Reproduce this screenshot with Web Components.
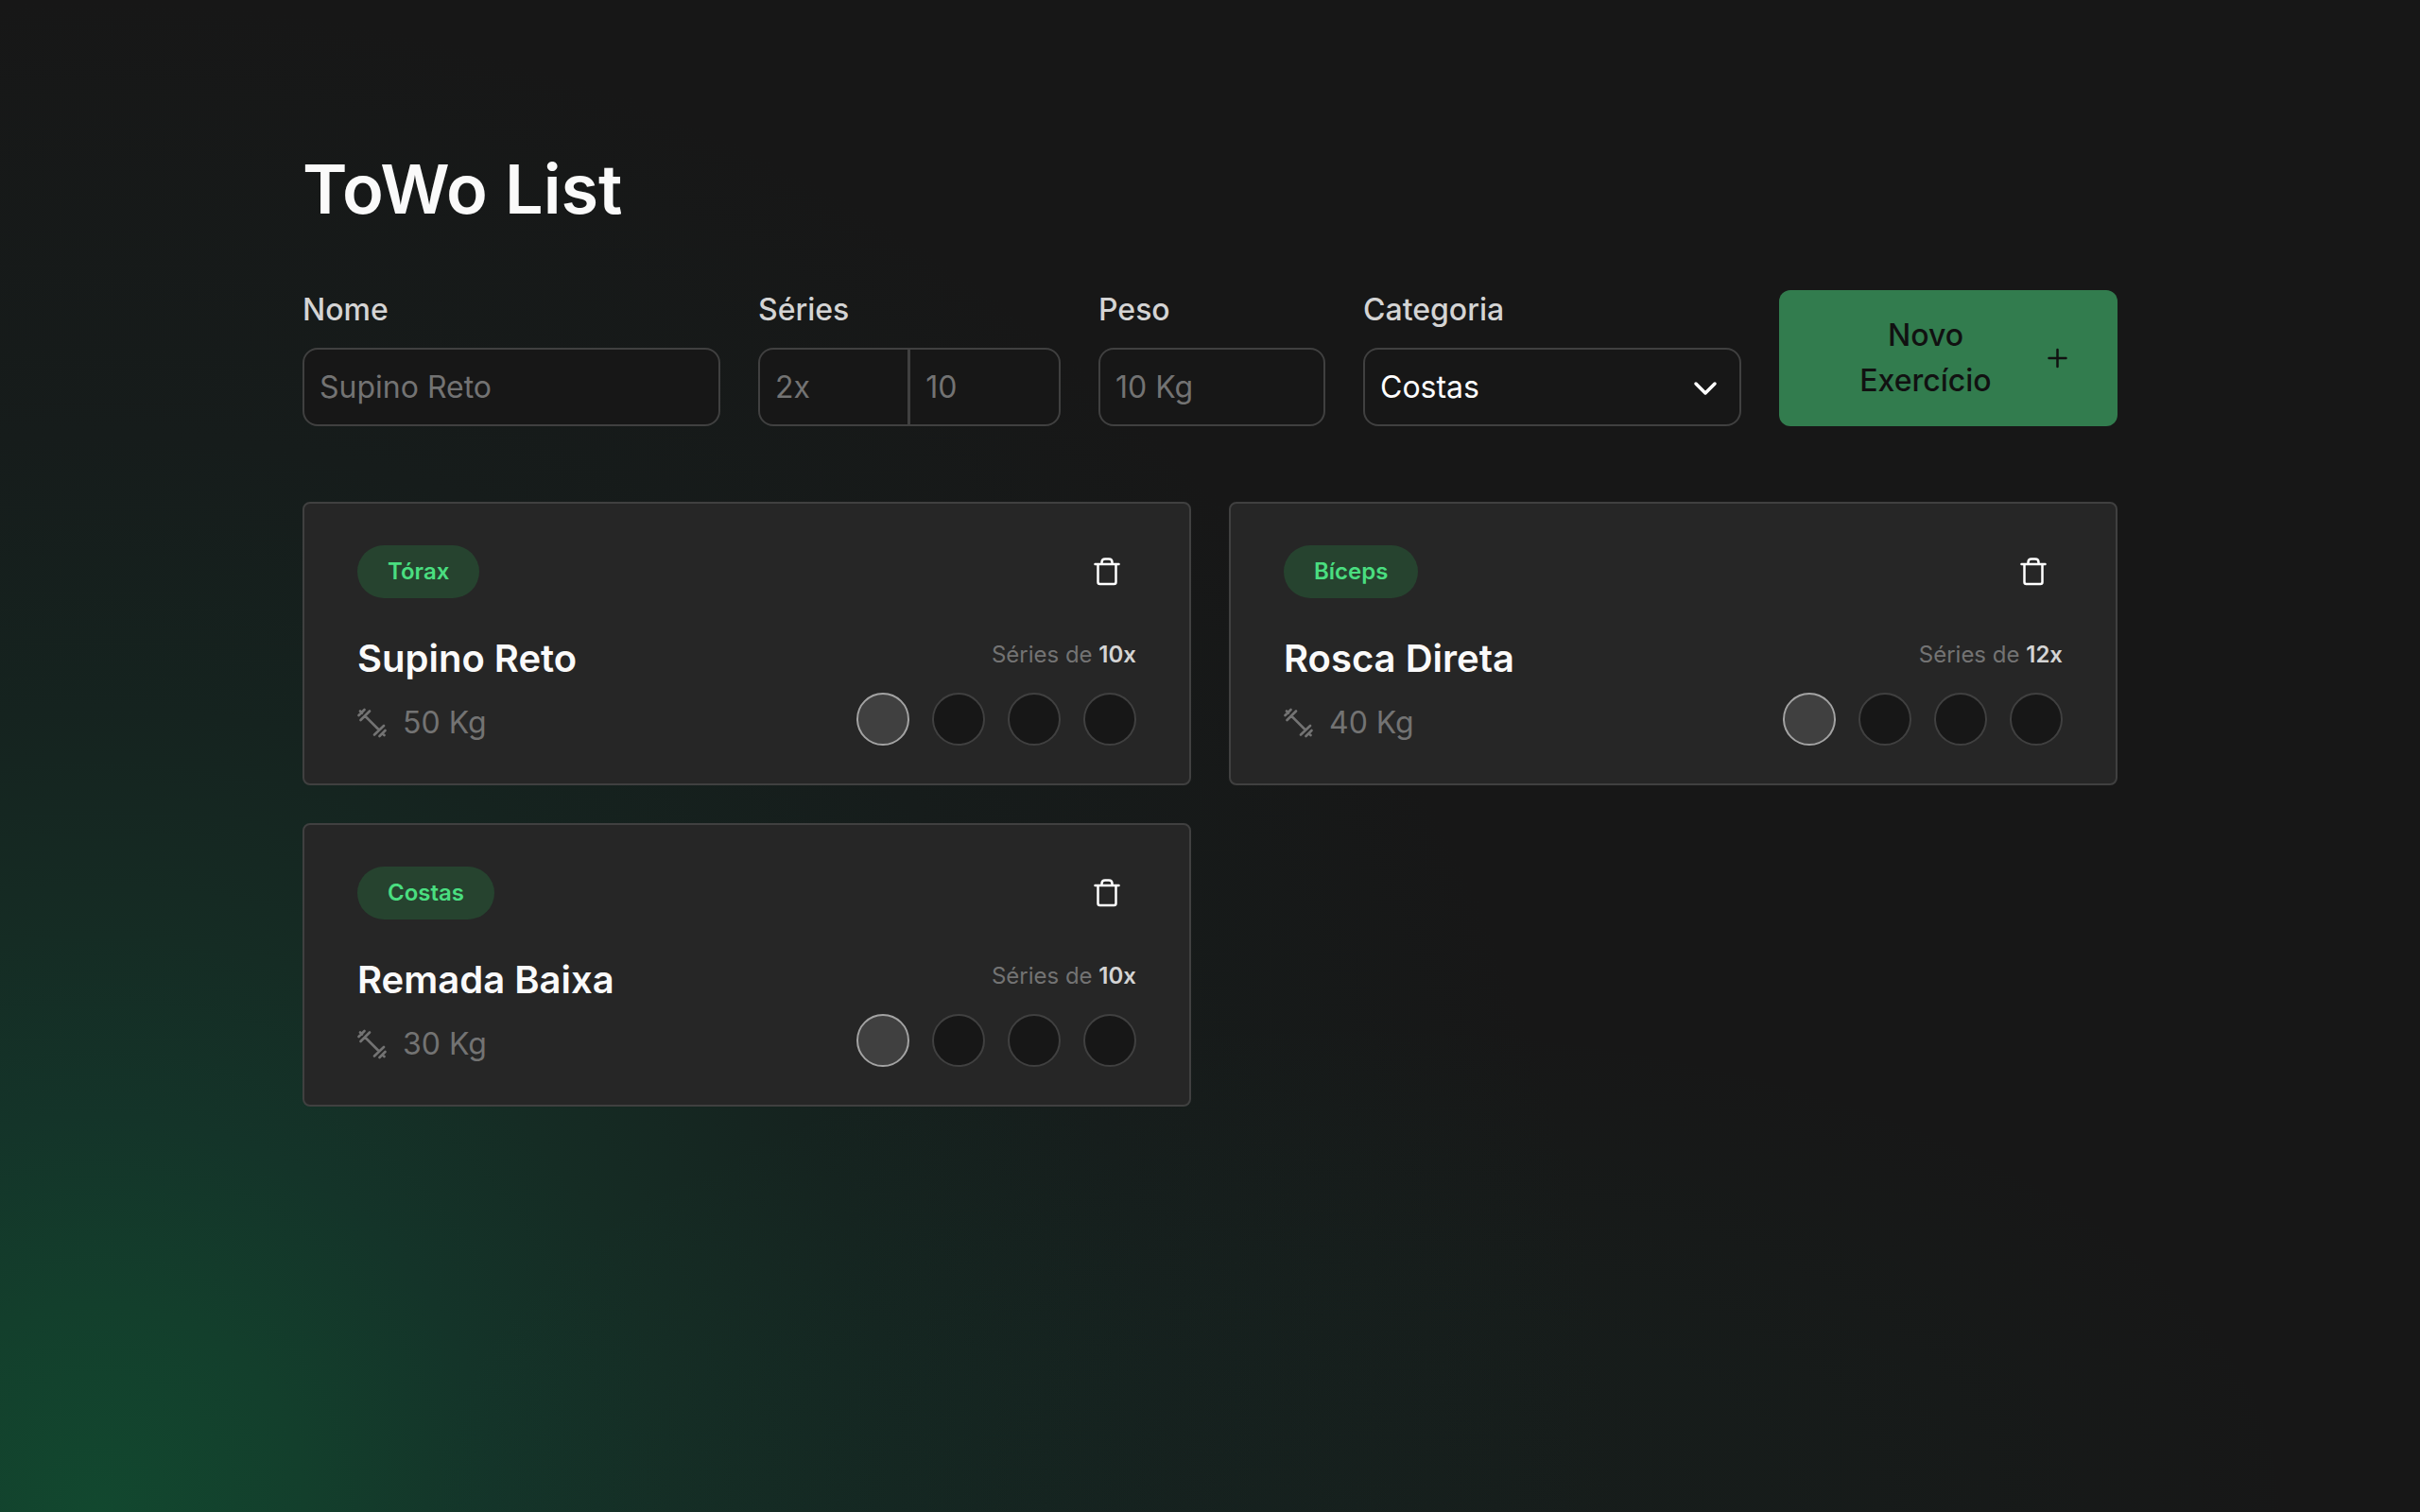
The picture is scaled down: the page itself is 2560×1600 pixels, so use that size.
<!DOCTYPE html>
<html lang="pt-BR">
<head>
<meta charset="utf-8">
<title>ToWo List</title>
<style>
html{min-height:100%;background:#171717}
body{margin:0;min-height:100vh;font-family:Inter,"Liberation Sans",sans-serif;font-size:32px;line-height:48px;color:#fafafa;
background:
radial-gradient(1000px 520px at 56% 100%,rgba(16,120,90,.065),rgba(16,120,90,.05) 45%,rgba(16,120,90,0)),
radial-gradient(circle at 4% 100%,#12482f 0,#133f2c 220px,#143429 420px,#152c24 610px,#15231f 850px,#161c1b 1140px,#171717 1600px) #171717}
</style>
</head>
<body>
<towo-app></towo-app>
<script>
const define=(name,html,setup)=>customElements.define(name,class extends HTMLElement{
  connectedCallback(){
    if(this.shadowRoot)return;
    const root=this.attachShadow({mode:'open'});
    root.innerHTML='<style>*{box-sizing:border-box}svg{display:block;flex:none}</style>'+html;
    if(setup)setup(this,root);
  }
});

define('towo-form',`<style>
:host{display:block}
form{display:flex;gap:40px;align-items:flex-end}
.field{display:flex;flex-direction:column;gap:20px;flex:0 0 auto}
.name{flex:1 1 0;min-width:0}.series{width:320px}.weight{width:240px}.category{width:400px}
label{color:#d4d4d4;font-weight:500;line-height:40px}
input,select{font:inherit;width:100%;height:83px;margin:0;padding:0 16px;background:#171717;border:2px solid #404040;border-radius:16px;color:#fff;outline:0;appearance:none}
input::placeholder{color:#737373;opacity:1}
.pair{display:flex}
.pair input:first-child{border-radius:16px 0 0 16px}
.pair input:last-child{border-radius:0 16px 16px 0;border-left-width:1px}
.select{display:grid;align-items:center}
.select>*{grid-area:1/1}
.select svg{justify-self:end;margin-right:20px;pointer-events:none}
button{display:flex;align-items:center;gap:16px;width:358px;height:144px;padding:0 48px;border:0;border-radius:12px;background:#327c4e;color:#111;font:inherit;font-weight:500}
button span{flex:1}
</style>
<form>
<div class="field name"><label for="n">Nome</label><input id="n" placeholder="Supino Reto"></div>
<div class="field series"><label for="s">Séries</label><div class="pair"><input id="s" placeholder="2x"><input aria-label="Repetições" placeholder="10"></div></div>
<div class="field weight"><label for="p">Peso</label><input id="p" placeholder="10 Kg"></div>
<div class="field category"><label for="c">Categoria</label><div class="select"><select id="c"><option>Costas</option><option>Tórax</option><option>Bíceps</option></select>
<svg width="32" height="32" viewBox="0 0 32 32" fill="none" stroke="#fff" stroke-width="3.500" stroke-linecap="round" stroke-linejoin="round"><path d="M4 12l10 10 10-10"/></svg></div></div>
<button type="button"><span>Novo Exercício</span><svg width="32" height="32" viewBox="0 0 32 32" fill="none" stroke="#111" stroke-width="2.500" stroke-linecap="round"><path d="M16.500 7v18M7.500 16h18"/></svg></button>
</form>`);

define('towo-card',`<style>
:host{display:flex;flex-direction:column;box-sizing:border-box;padding:40px 56px 36px;border:2px solid #404040;border-radius:8px;background:#262626}
.row{display:flex;justify-content:space-between;align-items:center}
.badge{height:56px;padding:0 32px;border-radius:28px;background:#26432f;color:#4ade80;font-size:24px;font-weight:600;line-height:56px}
.trash{padding:16px;border:0;background:none;display:flex}
h2{margin:0;font-size:40px;line-height:56px;font-weight:600}
.row.body{align-items:stretch;margin-top:32px}
.kg{display:flex;align-items:center;gap:16px;margin-top:12px;color:#737373;line-height:56px}
.side{display:flex;flex-direction:column;align-items:flex-end}
.reps{font-size:24px;line-height:48px;color:#737373}
b{font-weight:600;color:#d4d4d4}
.sets{display:flex;gap:24px;margin-top:16px}
.sets input{appearance:none;width:56px;height:56px;margin:0;border:2px solid #404040;border-radius:50%;background:#171717}
.sets input:checked{background:#404040;border-color:#a3a3a3}
</style>
<div class="row"><span class="badge"><slot name="category"></slot></span>
<button class="trash" type="button" aria-label="Remover"><svg width="32" height="32" viewBox="0 0 32 32" fill="none" stroke="#fff" stroke-width="2.500" stroke-linecap="round" stroke-linejoin="round"><path d="M4.500 8h25M7.500 8v19q0 2 2 2h15q2 0 2-2v-19M11.500 8v-2q0-3.500 3.500-3.500h4q3.500 0 3.500 3.500v2"/></svg></button></div>
<div class="row body"><div><h2><slot></slot></h2>
<div class="kg"><svg width="32" height="32" viewBox="0 0 32 32" fill="none" stroke="#737373" stroke-width="2.600" stroke-linecap="round"><path d="M8 8.500l15 15M3.500 13L13 3.500M18 28.500L28 19M1.500 8L7.500 2M3 3.500l2 2M23.500 30L29.500 24M26.500 27l2 2"/></svg><span><slot name="weight"></slot></span></div></div>
<div class="side"><div class="reps">Séries de <b></b></div><div class="sets"></div></div></div>`,(host,root)=>{
  root.querySelector('b').textContent=host.getAttribute('reps')+'x';
  const sets=root.querySelector('.sets');
  for(let i=0;i<4;i++){
    const box=document.createElement('input');
    box.type='checkbox';box.checked=i===0;box.setAttribute('aria-label','Série '+(i+1));
    sets.append(box);
  }
});

define('towo-app',`<style>
:host{display:block;padding:160px 12.5%}
h1{margin:0 0 67px;font-size:72px;line-height:80px;font-weight:600}
.grid{display:grid;grid-template-columns:1fr 1fr;gap:40px;margin-top:80px}
</style>
<h1>ToWo List</h1>
<towo-form></towo-form>
<div class="grid">
<towo-card reps="10"><span slot="category">Tórax</span>Supino Reto<span slot="weight">50 Kg</span></towo-card>
<towo-card reps="12"><span slot="category">Bíceps</span>Rosca Direta<span slot="weight">40 Kg</span></towo-card>
<towo-card reps="10"><span slot="category">Costas</span>Remada Baixa<span slot="weight">30 Kg</span></towo-card>
</div>`);
</script>
</body>
</html>
